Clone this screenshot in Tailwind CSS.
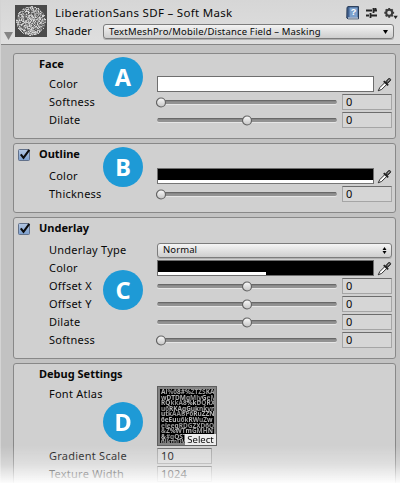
<!DOCTYPE html>
<html lang="en">
<head>
<meta charset="utf-8">
<title>Material Inspector</title>
<script src="https://cdn.jsdelivr.net/npm/@tailwindcss/browser@4"></script>
</head>
<body class="w-[400px] h-[483px] overflow-hidden bg-[#c2c2c2] font-['Noto_Sans','Open_Sans',sans-serif] text-[11px] leading-[18px] tracking-[0.24px] text-[#080808]">
<svg class="absolute h-0 w-0">
  <defs>
    <linearGradient id="knobFill" x1="0" y1="0" x2="0" y2="1"><stop offset="0" stop-color="#fafafa"/><stop offset="1" stop-color="#c4c4c4"/></linearGradient>
    <linearGradient id="checkFill" x1="0" y1="0" x2="0" y2="1"><stop offset="0" stop-color="#b4c7e2"/><stop offset="1" stop-color="#7c9fce"/></linearGradient>
  </defs>
  <symbol id="track" viewBox="0 0 180 5"><rect y="1" width="180" height="4" rx="2" fill="#e6e6e6"/><rect width="180" height="4" rx="2" fill="#929292"/><rect x="1" width="178" height="1.3" rx=".6" fill="#686868"/></symbol>
  <symbol id="knob" viewBox="0 0 11 11"><circle cx="5" cy="5.5" r="4.5" fill="url(#knobFill)" stroke="#636363" stroke-width="1.2"/></symbol>
  <symbol id="dropper" viewBox="0 0 16 16">
    <path d="M1.3 14.7 3 11.3 8.7 5.6l2 2L5 13.2z" fill="#fff" stroke="#222" stroke-width="1"/>
    <path d="M7.2 4.3l4.7 4.7" stroke="#222" stroke-width="1.9"/>
    <path d="M9.3 5.2l2.2-2.7c1-1.2 2.7-1.2 3 .1.2.9-.2 1.4-.8 1.9L11 6.9z" fill="#555" stroke="#1c1c1c"/>
    <path d="M11.4 4.6l1.8-1.7" stroke="#ccc" stroke-width=".8"/>
  </symbol>
  <symbol id="check" viewBox="0 0 14 13"><rect x=".5" y="1.5" width="11" height="11" rx="1" fill="url(#checkFill)" stroke="#62718a"/><path d="M2.8 6.4l2.7 3.4L11.3 1.8" fill="none" stroke="#0c0c0c" stroke-width="2.1"/></symbol>
</svg>
<div class="relative flex h-[483px] flex-col border-l border-[#d4d4d4]">
  <header class="flex h-[45px] shrink-0 border-b border-[#858585] bg-linear-to-b from-[#d6d6d6] to-[#dfdfdf]">
    <div class="flex w-[13px] items-end pb-[4px] pl-[3px]"><svg class="h-[8px] w-[9px]" viewBox="0 0 9 8"><path d="M0 0h9L4.5 8z" fill="#858585"/></svg></div>
    <canvas id="preview" width="32" height="32" class="mt-[5px] ml-px h-[32px] w-[32px]"></canvas>
    <div class="ml-[8px] flex grow flex-col">
      <div class="mt-[4px] flex h-[18px] items-center">
        <h1 class="w-[291px] whitespace-nowrap text-[11.5px] tracking-[0.3px]">LiberationSans SDF – Soft Mask</h1>
        <svg class="h-[14px] w-[13px]" viewBox="0 0 13 14"><path d="M1 1.5 2 .6h10.5v12.2H2L.8 12z" fill="#41618f" stroke="#263955"/><path d="M3.5 1.5h8v9.7h-8z" fill="#7ba0cc"/><path d="M2 12h10" stroke="#e8edf4" stroke-width="1"/><text x="7.4" y="9.4" text-anchor="middle" font-family="Liberation Sans" font-size="9" font-weight="700" letter-spacing="0" fill="#fff">?</text></svg>
        <svg class="ml-[7px] h-[12px] w-[11px]" viewBox="0 0 11 12"><path d="M0 3.5h6M8 3.5h3M7.5 1v5M0 8.5h3M5 8.5h6M4.5 6v5M9.5 1v3" fill="none" stroke="#242424" stroke-width="1.8"/></svg>
        <svg class="ml-[7px] h-[13px] w-[14px]" viewBox="0 0 14 13"><circle cx="5.2" cy="5.8" r="3" fill="none" stroke="#3b3b3b" stroke-width="2"/><path d="M5.2 .9v1.9M5.2 8.8v1.9M.3 5.8h1.9M8.2 5.8h1.9M1.7 2.3l1.4 1.4M7.3 7.9l1.4 1.4M1.7 9.3l1.4-1.4M7.3 3.7l1.4-1.4" stroke="#3b3b3b" stroke-width="1.9"/><path d="M9.4 8.8h4.4L11.6 12z" fill="#222"/></svg>
      </div>
      <div class="flex h-[18px] items-center">
        <span class="w-[48px] tracking-[0.05px]">Shader</span>
        <div class="mt-px flex h-[15px] w-[291px] items-center justify-between rounded-[3px] border border-[#7c7c7c] bg-linear-to-b from-[#f3f3f3] to-[#cecece] pr-[5px] pl-[5px] text-[9.5px] tracking-[0.16px] shadow-[0_1px_0_#b0b0b0]"><span class="whitespace-nowrap">TextMeshPro/Mobile/Distance Field – Masking</span><svg class="h-[4px] w-[5px]" viewBox="0 0 5 4"><path d="M0 0h5L2.5 4z"/></svg></div>
      </div>
    </div>
  </header>

  <main class="mt-[8px] ml-[12px] flex w-[383px] shrink-0 flex-col gap-[4px]">
    <section class="relative h-[86px] rounded-[3px] border border-[#888] bg-[#d0d0d0] pt-px">
      <h2 class="mb-[2px] pl-[25px] font-bold tracking-[0px]">Face</h2>
      <div class="flex h-[18px] items-center pl-[35px]"><label class="w-[108px]">Color</label><div class="h-[16px] w-[217px] border border-[#6e6e6e] bg-white"></div><svg class="ml-[3px] h-[15px] w-[15px]"><use href="#dropper"/></svg></div>
      <div class="flex h-[18px] items-center pl-[35px]"><label class="w-[108px]">Softness</label><div class="relative mr-[5px] flex h-[12px] w-[180px] items-center pt-px"><svg class="h-[5px] w-[180px]"><use href="#track"/></svg><svg class="absolute top-[0.5px] left-[-1.5px] h-[11px] w-[11px]"><use href="#knob"/></svg></div><div class="flex h-[16px] w-[50px] items-center border border-[#a5a5a5] border-t-[#6c6c6c] bg-[#d6d6d6] pl-[3px]">0</div></div>
      <div class="flex h-[18px] items-center pl-[35px]"><label class="w-[108px]">Dilate</label><div class="relative mr-[5px] flex h-[12px] w-[180px] items-center pt-px"><svg class="h-[5px] w-[180px]"><use href="#track"/></svg><svg class="absolute top-[0.5px] left-[84.5px] h-[11px] w-[11px]"><use href="#knob"/></svg></div><div class="flex h-[16px] w-[50px] items-center border border-[#a5a5a5] border-t-[#6c6c6c] bg-[#d6d6d6] pl-[3px]">0</div></div>
      <b class="absolute top-[3px] left-[89px] flex h-[40px] w-[40px] items-center justify-center rounded-full bg-[#1e9ad6] text-[23.5px] tracking-normal text-white">A</b>
    </section>

    <section class="relative h-[70px] rounded-[3px] border border-[#888] bg-[#d0d0d0] pt-px">
      <h2 class="mb-[4px] flex items-center pl-[4px] font-bold tracking-[0px]"><svg class="mr-[7px] h-[13px] w-[14px]"><use href="#check"/></svg>Outline</h2>
      <div class="flex h-[18px] items-center pl-[35px]"><label class="w-[108px]">Color</label><div class="h-[16px] w-[217px] border border-[#6e6e6e] border-b-[#777] bg-white"><div class="h-[11px] bg-black"></div></div><svg class="ml-[3px] h-[15px] w-[15px]"><use href="#dropper"/></svg></div>
      <div class="flex h-[18px] items-center pl-[35px]"><label class="w-[108px]">Thickness</label><div class="relative mr-[5px] flex h-[12px] w-[180px] items-center pt-px"><svg class="h-[5px] w-[180px]"><use href="#track"/></svg><svg class="absolute top-[0.5px] left-[-1.5px] h-[11px] w-[11px]"><use href="#knob"/></svg></div><div class="flex h-[16px] w-[50px] items-center border border-[#a5a5a5] border-t-[#6c6c6c] bg-[#d6d6d6] pl-[3px]">0</div></div>
      <b class="absolute top-[3px] left-[89px] flex h-[40px] w-[40px] items-center justify-center rounded-full bg-[#1e9ad6] text-[23.5px] tracking-normal text-white">B</b>
    </section>

    <section class="relative h-[142px] rounded-[3px] border border-[#888] bg-[#d0d0d0] pt-px">
      <h2 class="mb-[4px] flex items-center pl-[4px] font-bold tracking-[0px]"><svg class="mr-[7px] h-[13px] w-[14px]"><use href="#check"/></svg>Underlay</h2>
      <div class="flex h-[18px] items-center pl-[35px]"><label class="w-[108px]">Underlay Type</label><div class="flex h-[15px] w-[235px] items-center justify-between rounded-[3px] border border-[#7c7c7c] bg-linear-to-b from-[#f5f5f5] to-[#cecece] pr-[4px] pl-[5px] text-[9.5px] tracking-[0.1px] shadow-[0_1px_0_#b0b0b0]"><span>Normal</span><svg class="h-[7px] w-[5px]" viewBox="0 0 5 7"><path d="M.5 3h4L2.5 0zM.5 4h4L2.5 7z"/></svg></div></div>
      <div class="flex h-[18px] items-center pl-[35px]"><label class="w-[108px]">Color</label><div class="flex h-[16px] w-[217px] flex-col justify-end border border-[#6e6e6e] bg-black"><div class="h-[3px] w-[108px] bg-white"></div></div><svg class="ml-[3px] h-[15px] w-[15px]"><use href="#dropper"/></svg></div>
      <div class="flex h-[18px] items-center pl-[35px]"><label class="w-[108px]">Offset X</label><div class="relative mr-[5px] flex h-[12px] w-[180px] items-center pt-px"><svg class="h-[5px] w-[180px]"><use href="#track"/></svg><svg class="absolute top-[0.5px] left-[84.5px] h-[11px] w-[11px]"><use href="#knob"/></svg></div><div class="flex h-[16px] w-[50px] items-center border border-[#a5a5a5] border-t-[#6c6c6c] bg-[#d6d6d6] pl-[3px]">0</div></div>
      <div class="flex h-[18px] items-center pl-[35px]"><label class="w-[108px]">Offset Y</label><div class="relative mr-[5px] flex h-[12px] w-[180px] items-center pt-px"><svg class="h-[5px] w-[180px]"><use href="#track"/></svg><svg class="absolute top-[0.5px] left-[84.5px] h-[11px] w-[11px]"><use href="#knob"/></svg></div><div class="flex h-[16px] w-[50px] items-center border border-[#a5a5a5] border-t-[#6c6c6c] bg-[#d6d6d6] pl-[3px]">0</div></div>
      <div class="flex h-[18px] items-center pl-[35px]"><label class="w-[108px]">Dilate</label><div class="relative mr-[5px] flex h-[12px] w-[180px] items-center pt-px"><svg class="h-[5px] w-[180px]"><use href="#track"/></svg><svg class="absolute top-[0.5px] left-[84.5px] h-[11px] w-[11px]"><use href="#knob"/></svg></div><div class="flex h-[16px] w-[50px] items-center border border-[#a5a5a5] border-t-[#6c6c6c] bg-[#d6d6d6] pl-[3px]">0</div></div>
      <div class="flex h-[18px] items-center pl-[35px]"><label class="w-[108px]">Softness</label><div class="relative mr-[5px] flex h-[12px] w-[180px] items-center pt-px"><svg class="h-[5px] w-[180px]"><use href="#track"/></svg><svg class="absolute top-[0.5px] left-[-1.5px] h-[11px] w-[11px]"><use href="#knob"/></svg></div><div class="flex h-[16px] w-[50px] items-center border border-[#a5a5a5] border-t-[#6c6c6c] bg-[#d6d6d6] pl-[3px]">0</div></div>
      <b class="absolute top-[52px] left-[89px] flex h-[40px] w-[40px] items-center justify-center rounded-full bg-[#1e9ad6] text-[23.5px] tracking-normal text-white">C</b>
    </section>

    <section class="relative h-[130px] rounded-[3px] border border-[#888] bg-[#d0d0d0] pt-px">
      <h2 class="mb-[2px] pl-[25px] font-bold tracking-[0px]">Debug Settings</h2>
      <div class="flex h-[62px] pl-[35px]"><label class="w-[108px]">Font Atlas</label><div class="relative mt-px h-[60px] w-[60px] border border-[#5e5e5e] bg-[#848484] p-[2px]"><canvas id="atlas" width="54" height="54" class="h-[54px] w-[54px]"></canvas><span class="absolute right-0 bottom-0 h-[11px] w-[31px] bg-[#ececec] text-center text-[9.5px] leading-[11px] tracking-[0px]">Select</span></div></div>
      <div class="flex h-[18px] items-center pl-[35px]"><label class="w-[108px]">Gradient Scale</label><div class="flex h-[16px] w-[55px] items-center border border-[#a5a5a5] border-t-[#6c6c6c] bg-[#d6d6d6] pl-[3px]">10</div></div>
      <div class="flex h-[18px] items-center pl-[35px]"><label class="w-[108px]">Texture Width</label><div class="flex h-[16px] w-[55px] items-center border border-[#a5a5a5] border-t-[#6c6c6c] bg-[#d6d6d6] pl-[3px]">1024</div></div>
      <b class="absolute top-[38px] left-[89px] flex h-[40px] w-[40px] items-center justify-center rounded-full bg-[#1e9ad6] text-[23.5px] tracking-normal text-white">D</b>
    </section>
  </main>
  <div class="absolute right-0 bottom-0 left-[-1px] h-[38px] bg-linear-to-b from-white/0 via-white/32 to-white/95"></div>
</div>
<script>
  let seed = 17;
  const rnd = () => (seed = (seed * 16807) % 2147483647) / 2147483647;
  // Material preview: speckled sphere
  const p = document.getElementById('preview').getContext('2d');
  p.fillStyle = '#4b4b4b';
  p.fillRect(0, 0, 32, 32);
  for (let y = 0; y < 32; y++) for (let x = 0; x < 32; x++) {
    if (Math.hypot(x - 15.5, y - 15.5) > 14.6) continue;
    const v = Math.round(80 + rnd() * 145);
    p.fillStyle = `rgb(${v},${v},${v})`;
    p.fillRect(x, y, 1, 1);
  }
  // Font atlas thumbnail: densely packed glyphs
  const a = document.getElementById('atlas').getContext('2d');
  a.fillRect(0, 0, 54, 54);
  const glyphs = 'AGRWEMHBnQ8#SKD&gmw%6ZXyuNlPTiekt';
  a.font = 'bold 6.5px "Noto Sans"';
  for (let y = 5; y < 59; y += 5.6) for (let x = 1; x < 52; ) {
    const g = glyphs[Math.floor(rnd() * glyphs.length)];
    const v = Math.round(140 + rnd() * 50);
    a.fillStyle = `rgb(${v},${v},${v})`;
    a.fillText(g, x, y);
    x += a.measureText(g).width;
  }
</script>
</body>
</html>
